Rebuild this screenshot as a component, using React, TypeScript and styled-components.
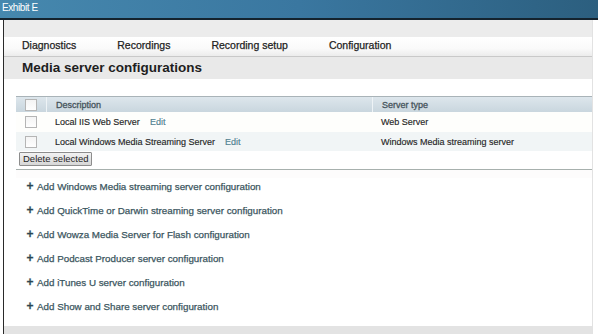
import React from "react";
import styled, { createGlobalStyle } from "styled-components";

const Global = createGlobalStyle`
  html, body { margin: 0; padding: 0; background: #ffffff; }
  body { font-family: "Liberation Sans", Arial, sans-serif; width: 598px; height: 334px; overflow: hidden; }
`;

const Page = styled.div`
  width: 598px;
  height: 334px;
  display: flex;
  flex-direction: column;
  background: #fff;
`;

const TitleBar = styled.div`
  height: 18px;
  background: linear-gradient(90deg, #4688ae 0%, #3a77a0 50%, #2c5f7f 100%);
  border-bottom: 2px solid #14232e;
  color: #fff;
  font-size: 10px;
  line-height: 15px;
  padding-left: 2px;
  letter-spacing: -0.4px;
`;

const Panel = styled.div`
  flex: 1;
  margin-left: 3px;
  width: 588px;
  border-left: 1px solid #2a2a2a;
  border-right: 1px solid #e2e2e2;
  display: flex;
  flex-direction: column;
`;

const TopGap = styled.div`
  height: 17px;
  background: #ececec;
`;

const TabBar = styled.div`
  height: 20px;
  box-sizing: border-box;
  padding-bottom: 3px;
  display: flex;
  align-items: center;
  gap: 41px;
  padding-left: 18px;
  background: linear-gradient(180deg, #ffffff 0%, #fafafa 60%, #ececec 100%);
  border-bottom: 1px solid #c9c9c9;
`;

const Tab = styled.span`
  font-size: 10.5px;
  color: #222;
  -webkit-text-stroke: 0.25px #222;
`;

const PageHeader = styled.div`
  height: 22px;
  background: #e9e9e9;
  padding-left: 18px;
  font-size: 13.5px;
  font-weight: bold;
  color: #1e1e1e;
  line-height: 22px;
`;

const Content = styled.div`
  flex: 1;
  background: #fff;
  display: flex;
  flex-direction: column;
  padding-top: 17px;
`;

const TableWrap = styled.div`
  margin-left: 12px;
  display: flex;
  flex-direction: column;
`;

const Table = styled.div`
  border-top: 1px solid #a9b3b8;
  display: flex;
  flex-direction: column;
`;

const Row = styled.div<{ $variant: "head" | "odd" | "even" }>`
  display: grid;
  grid-template-columns: 30px 326px 1fr;
  align-items: center;
  height: ${(p) => (p.$variant === "head" ? "15px" : p.$variant === "odd" ? "20px" : "19px")};
  background: ${(p) =>
    p.$variant === "head"
      ? "linear-gradient(180deg, #dde6ec 0%, #c9d6de 100%)"
      : p.$variant === "even"
      ? "#f1f5f6"
      : "#fefefc"};
  font-size: 9px;
  color: ${(p) => (p.$variant === "head" ? "#46545c" : "#262626")};
  -webkit-text-stroke: ${(p) => (p.$variant === "head" ? "0.3px" : "0.15px")} currentColor;
`;

const BoxCell = styled.div`
  display: flex;
  justify-content: center;
  align-items: center;
  height: 100%;
`;

const HeadCell = styled.div`
  height: 100%;
  display: flex;
  align-items: center;
  padding-left: 9px;
  border-left: 1px solid #eef3f6;
`;

const Cell = styled.div`
  display: flex;
  align-items: center;
  gap: 10px;
  padding-left: 9px;
`;

const Check = styled.span`
  width: 10px;
  height: 10px;
  border: 1px solid #b5b5b5;
  background: linear-gradient(180deg, #f4f4f4, #fefefe);
  box-sizing: content-box;
`;

const EditLink = styled.span`
  color: #4f8090;
`;

const DeleteButton = styled.button`
  align-self: flex-start;
  margin-left: 3px;
  margin-top: 1px;
  height: 14px;
  padding: 0 3px;
  font-family: "Liberation Sans", Arial, sans-serif;
  font-size: 9.5px;
  color: #1f1f1f;
  background: linear-gradient(180deg, #f2f2f2, #d6d6d6);
  border: 1px solid #8d8d8d;
  border-radius: 1px;
  line-height: 12px;
`;

const Divider = styled.div`
  margin-top: 3px;
  margin-left: 12px;
  border-top: 1px solid #a7b0ad;
  background: #fdfcfc;
  height: 8px;
`;

const AddList = styled.div`
  display: flex;
  flex-direction: column;
  gap: 10px;
  padding-left: 22px;
  padding-top: 1px;
`;

const AddItem = styled.div`
  display: flex;
  align-items: center;
  gap: 3px;
  height: 14px;
  font-size: 9.8px;
  color: #3b5660;
  -webkit-text-stroke: 0.25px #3b5660;
`;

const Plus = styled.span`
  font-size: 12px;
  font-weight: bold;
  color: #2c4650;
  width: 8px;
  text-align: center;
`;

const BottomBar = styled.div`
  height: 8px;
  background: #e3e3e3;
`;

const addItems = [
  "Add Windows Media streaming server configuration",
  "Add QuickTime or Darwin streaming server configuration",
  "Add Wowza Media Server for Flash configuration",
  "Add Podcast Producer server configuration",
  "Add iTunes U server configuration",
  "Add Show and Share server configuration",
];

export default function App() {
  return (
    <Page>
      <Global />
      <TitleBar>Exhibit E</TitleBar>
      <Panel>
        <TopGap />
        <TabBar>
          <Tab>Diagnostics</Tab>
          <Tab>Recordings</Tab>
          <Tab>Recording setup</Tab>
          <Tab>Configuration</Tab>
        </TabBar>
        <PageHeader>Media server configurations</PageHeader>
        <Content>
          <TableWrap>
            <Table>
              <Row $variant="head">
                <BoxCell><Check /></BoxCell>
                <HeadCell>Description</HeadCell>
                <HeadCell>Server type</HeadCell>
              </Row>
              <Row $variant="odd">
                <BoxCell><Check /></BoxCell>
                <Cell>Local IIS Web Server<EditLink>Edit</EditLink></Cell>
                <Cell>Web Server</Cell>
              </Row>
              <Row $variant="even">
                <BoxCell><Check /></BoxCell>
                <Cell>Local Windows Media Streaming Server<EditLink>Edit</EditLink></Cell>
                <Cell>Windows Media streaming server</Cell>
              </Row>
            </Table>
            <DeleteButton>Delete selected</DeleteButton>
          </TableWrap>
          <Divider />
          <AddList>
            {addItems.map((t) => (
              <AddItem key={t}>
                <Plus>+</Plus>
                {t}
              </AddItem>
            ))}
          </AddList>
        </Content>
        <BottomBar />
      </Panel>
    </Page>
  );
}
